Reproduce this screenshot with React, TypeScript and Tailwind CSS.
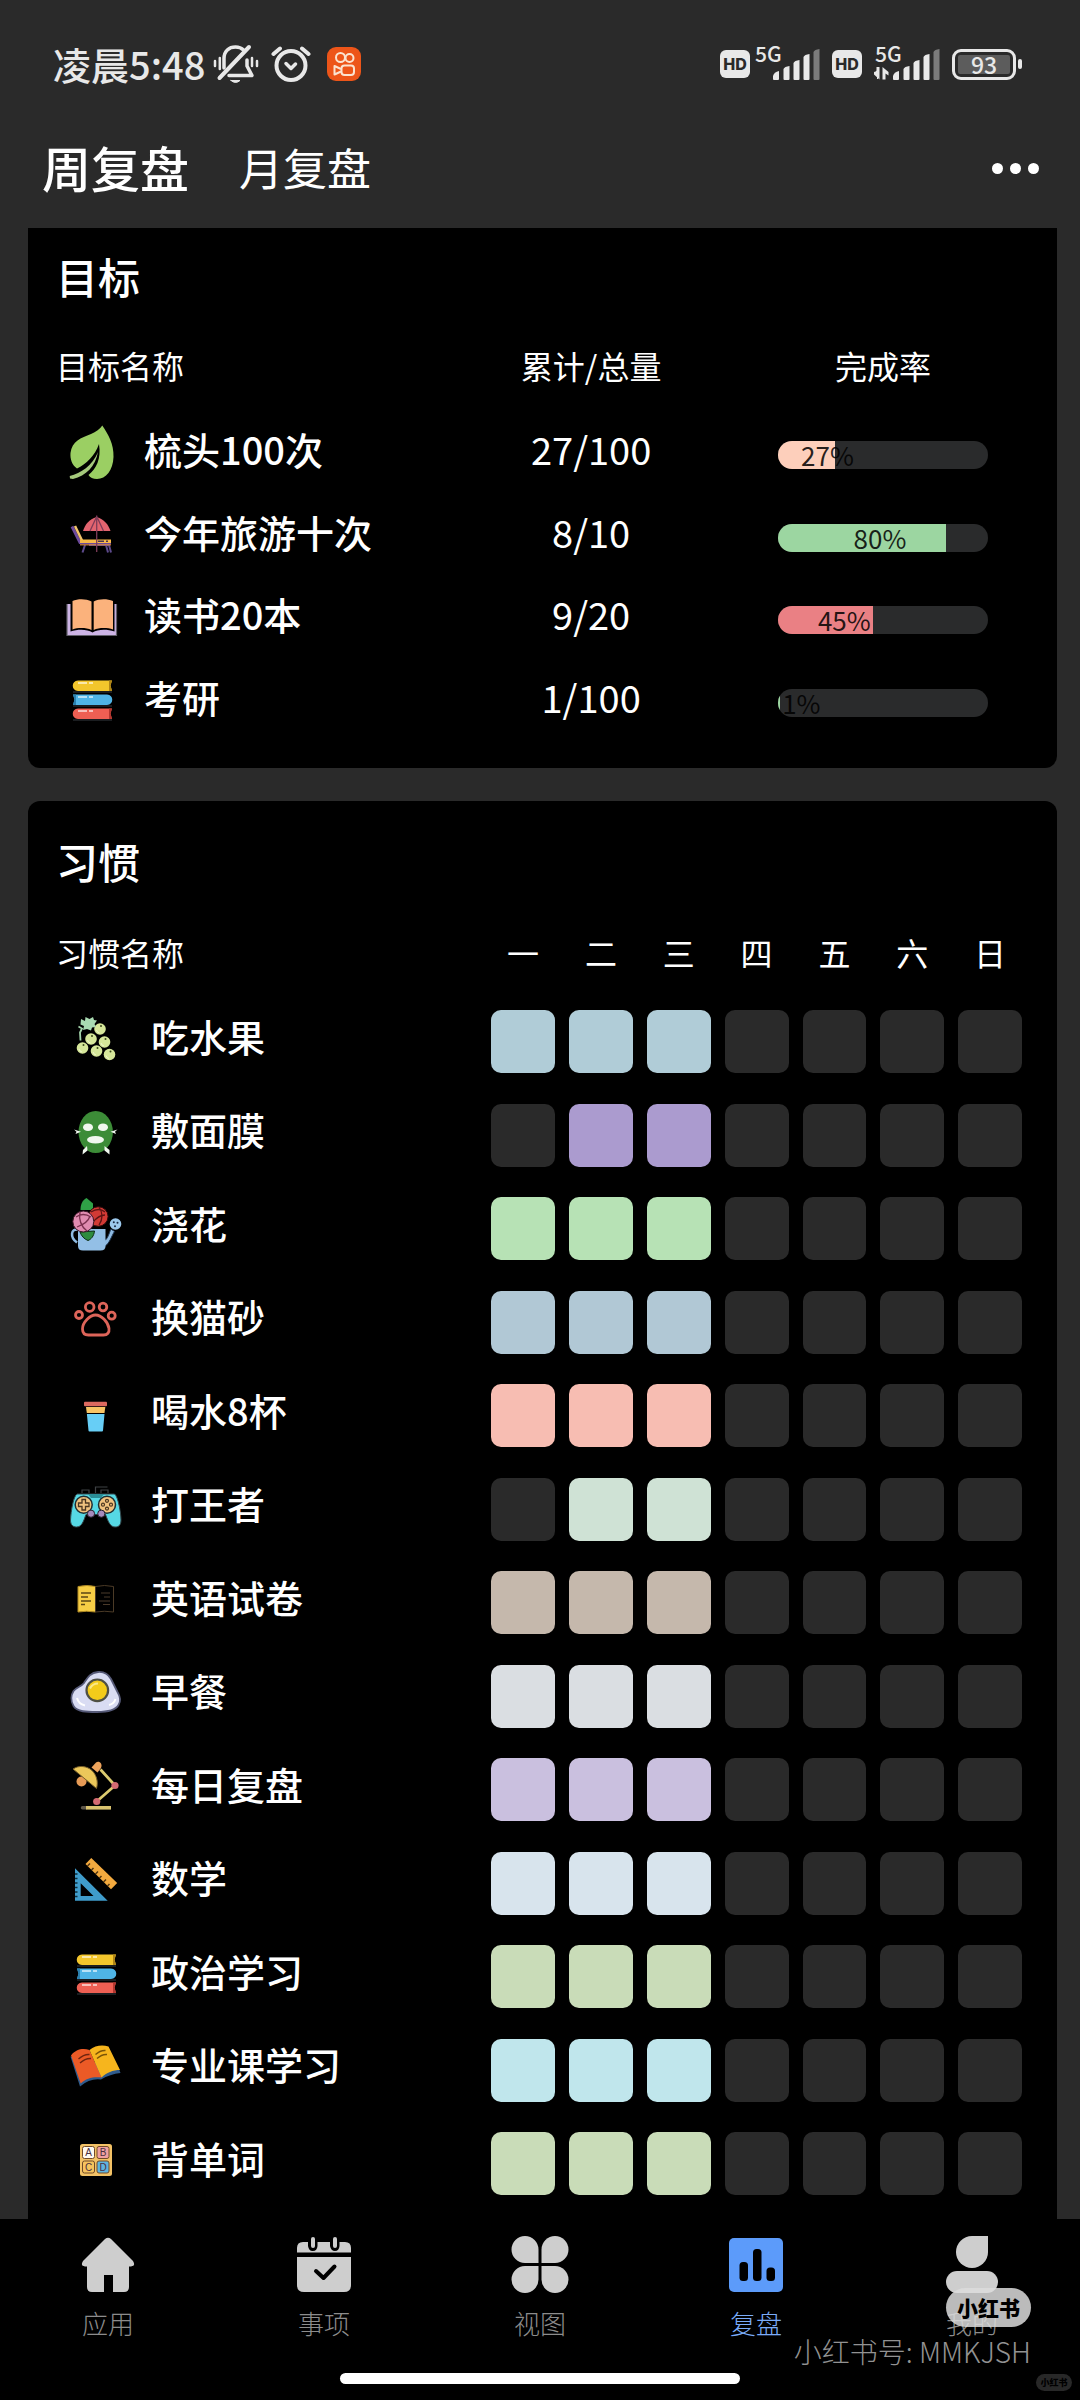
import { useState } from "react";
import type { ReactNode } from "react";
import clsx from "clsx";

interface Goal {
  name: string;
  progress: string;
  percent: number;
  icon: ReactNode;
  fill: string;
  labelOffset: string;
}

interface Habit {
  name: string;
  icon: ReactNode;
  color: string;
  done: number[];
}

const WEEKDAYS = ["一", "二", "三", "四", "五", "六", "日"];

function Icon({ children }: { children: ReactNode }) {
  return (
    <svg viewBox="0 0 56 56" className="size-14 shrink-0" fill="none" aria-hidden="true">
      {children}
    </svg>
  );
}

function LeafIcon() {
  return (
    <Icon>
      <path
        d="M38.3 2.5C44 11 50 21 49.5 34C49 47 42 56 33 56C29 56 26 54.500 24.500 52C32 46 37.500 36 35 21C31 33 22 41 13 45.500C8 42 6 36 6.500 30C8 18 17 15 27 11C32 9 36 6 38.3 2.5Z"
        fill="#9bcf63"
      />
      <path d="M5.700 53C17 50 28 43 34 29C31.500 43 22 53 9 56L6 55.500Z" fill="#a5c97c" />
    </Icon>
  );
}

function BeachIcon() {
  return (
    <Icon>
      <path d="M8 20.500L16 36.500H47" stroke="#6d4a9c" strokeWidth="3" />
      <path d="M11 20L18 34.500" stroke="#f2c46b" strokeWidth="2.500" />
      <rect x="16" y="33.500" width="31" height="3.500" fill="#f7b948" />
      <path d="M34 35.200h6M42 35.200h2" stroke="#4a3550" strokeWidth="1.500" />
      <path d="M21 39l-2.500 7.500M25 39h20l2 7.500M42 39l2 7.500" stroke="#5d4a8c" strokeWidth="2" />
      <path d="M16 38.800H47" stroke="#d98a4a" strokeWidth="1.200" />
      <path d="M32.700 11C25 13.500 21 18.500 19 25h27.500C44.500 18.500 40 13.500 32.700 11Z" fill="#e2646f" />
      <path d="M32.500 11L26 25M33 11l6.500 14M32.700 9.500V46" stroke="#7d3c58" strokeWidth="1.300" />
    </Icon>
  );
}

function OpenBookIcon() {
  return (
    <Icon>
      <path d="M3 16v31.500h49.500V16" fill="#cdb4e6" stroke="#63606b" strokeWidth="1.200" />
      <path
        d="M6.500 11.500C13 9 22 9 28.500 13C35 9 44 9 50.500 11.500V43.500C43 41 34 41 28.500 44.500C23 41 14 41 6.500 43.500Z"
        fill="#000"
      />
      <path d="M8.500 13C14 10.500 22 10.500 27.500 13.500V42C22 39.500 14 39.500 8.500 41.500Z" fill="#fbb27c" />
      <path d="M29.700 13.500C35 10.500 43 10.500 49 13V41.500C43 39.500 35 39.500 29.700 42Z" fill="#fbb27c" />
    </Icon>
  );
}

function BookStackIcon() {
  return (
    <Icon>
      <path d="M14 9.500H48L46.500 14.500L48 20H14C7 20 7 9.500 14 9.500Z" fill="#f3c62c" />
      <path d="M45 9.500h3l-1.500 5L48 20h-3Z" fill="#b08516" />
      <path d="M43 23.500H9L10.500 28.500L9 34H43C50 34 50 23.500 43 23.500Z" fill="#4fb4e6" />
      <path d="M9 23.500h3v10.500H9l1.500-5.500Z" fill="#2a7fae" />
      <path d="M14 37.500H48L46.500 42.500L48 48H14C7 48 7 37.500 14 37.500Z" fill="#ee5f53" />
      <path d="M45 37.500h3l-1.500 5L48 48h-3Z" fill="#b3362f" />
      <path d="M14 12h9M25 12h4M14 26h9M25 26h4M14 40h9M25 40h4" stroke="#fff" strokeOpacity=".8" strokeWidth="1.500" />
      <path d="M9 21H48M9 35H48M9 49H48" stroke="#6a7480" strokeOpacity=".5" />
    </Icon>
  );
}

function GrapeIcon() {
  const grapes = [
    [32, 19],
    [23, 29],
    [36.5, 32],
    [14.5, 38],
    [28.500, 41],
    [41.500, 44.500],
  ];
  return (
    <Icon>
      {grapes.map(([cx, cy]) => (
        <g key={`${cx}-${cy}`}>
          <circle cx={cx} cy={cy} r="5.800" fill="#d6e79a" />
          <circle cx={cx + 1} cy={cy - 3} r="1" fill="#3c4a1c" />
          <path d={`M${cx - 3.5} ${cy + 1}a4 4 0 0 0 3 3`} stroke="#f1f7cf" />
        </g>
      ))}
      <path d="M10.500 16.500l3.500 2-2 4 .5 8" stroke="#a4d3ab" strokeWidth="1.800" />
      <path
        d="M13 9L17 11L17.500 7L21.500 9L25 7L26 10L29 10.500L26.500 14L28 17L24 17.500L23 20.500L19 19L15 20L16 16L12.500 14.500Z"
        fill="#a9dab2"
      />
    </Icon>
  );
}

function FaceMaskIcon() {
  return (
    <Icon>
      <ellipse cx="27.700" cy="29" rx="17.200" ry="21" fill="#3c8c37" />
      <g fill="#f1f8ef">
        <ellipse cx="20" cy="24.300" rx="5" ry="3.800" />
        <ellipse cx="35" cy="24.300" rx="5" ry="3.800" />
        <ellipse cx="27.500" cy="36.700" rx="8.500" ry="3.800" />
        <path d="M6 26.500L13 28.700L7.500 31L8.500 28.700Z" />
        <path d="M49.500 26.500L42.500 28.700L48 31L47 28.700Z" />
        <path d="M19 43L19.500 47.500L14.500 51.500L15 47Z" />
        <path d="M36.500 43L36.500 47.500L41.500 51.500L41.500 47Z" />
      </g>
    </Icon>
  );
}

function WateringIcon() {
  return (
    <Icon>
      <path d="M10 32.500C3 31.500 1.500 40 9 45.500" stroke="#8fbbe2" strokeWidth="2.500" />
      <path d="M36 44C40 42 41 36 43 32L46.500 34.500C43 40 42 46 36 50Z" fill="#8fbbe2" stroke="#1d3350" />
      <path d="M10 32h27.500v17q0 4.500-5 4.500H15q-5 0-5-4.500Z" fill="#93bfe6" />
      <circle cx="47.500" cy="27" r="5.800" fill="#9cc8ec" />
      <g fill="#1b2a44">
        <circle cx="45.800" cy="25.200" r="1" />
        <circle cx="49.500" cy="25.800" r="1" />
        <circle cx="47" cy="29.300" r="1" />
      </g>
      <path d="M12 35L26.500 34C26 39 23 42.500 20 43.500C16 42 13.500 39 12 35Z" fill="#2e8b3d" stroke="#0c2b12" />
      <path d="M18.500 1L25 6.500V13H12.500C12.500 8 14 3.500 18.500 1Z" fill="#2fa147" />
      <circle cx="30.300" cy="19.500" r="9.800" fill="#d23a35" stroke="#2b0a0a" />
      <path d="M23 15q8-5 14 0M31 10q6 9 0 18M25 25q6-7 12-7" stroke="#5e1414" strokeWidth="1.300" />
      <circle cx="15.300" cy="24.500" r="10.500" fill="#e08bb0" stroke="#3a1626" />
      <path d="M8 20q7-5 15 0M12 15q-2 12 7 19M22 19q-2 7-13 11" stroke="#7a2f4e" strokeWidth="1.300" />
    </Icon>
  );
}

function PawIcon() {
  return (
    <Icon>
      <g stroke="#dd6459" strokeWidth="2.800">
        <circle cx="11" cy="25" r="3.500" />
        <circle cx="21.700" cy="17" r="4.300" />
        <circle cx="35" cy="17" r="3.800" />
        <circle cx="43.700" cy="25.700" r="3.500" />
        <path d="M27.500 25C22 25 14.500 32.500 14.500 39C14.500 43 17 45 20.500 45H35.500C39.500 45 41.500 42.500 41 38.500C40 32 33.500 25 27.500 25Z" />
      </g>
    </Icon>
  );
}

function CupIcon() {
  return (
    <Icon>
      <rect x="16" y="17.800" width="23" height="4.500" rx="1" fill="#dc695f" />
      <path d="M18 23H37.300L36.500 29H18.800Z" fill="#f8c465" />
      <path d="M18.900 30H36.500L35 46.500q0 1-1 1H21.500q-1 0-1-1Z" fill="#67cef6" />
    </Icon>
  );
}

function GamepadIcon() {
  return (
    <Icon>
      <path d="M14 16v-3h7v3M33 16v-3h7v3M27.500 16v-6h12" stroke="#3f4245" strokeWidth="1.200" />
      <path
        d="M9 17H46.500C50 19 53 36 53 43C53 49 50 50 47 50C42 50 40 44 37.500 37.500H18C15.500 44 14 50 8.500 50C5 50 2.500 48 2.500 43C3 34 5.500 19 9 17Z"
        fill="#56d8e4"
        stroke="#34474c"
      />
      <path d="M20 17l3 4h10l3-4" fill="#2a8d96" />
      <circle cx="15.700" cy="27.700" r="8.500" fill="#f0c27f" stroke="#1f2f33" strokeWidth="1.500" />
      <circle cx="39" cy="27.700" r="8.500" fill="#f0c27f" stroke="#1f2f33" strokeWidth="1.500" />
      <path d="M14 22.500h3.500V26H21v3.500h-3.500V33H14v-3.500h-3.500V26H14Z" stroke="#4c3721" strokeWidth="1.300" />
      <g stroke="#4c3721" strokeWidth="1.200">
        <circle cx="39" cy="23.800" r="1.500" />
        <circle cx="39" cy="31.600" r="1.500" />
        <circle cx="35" cy="27.700" r="1.500" />
        <circle cx="43" cy="27.700" r="1.500" />
      </g>
      <circle cx="23" cy="36.700" r="3.600" fill="#a68bbd" stroke="#29222f" />
      <circle cx="33.300" cy="36.700" r="3.600" fill="#a68bbd" stroke="#29222f" />
    </Icon>
  );
}

function PaperIcon() {
  return (
    <Icon>
      <path d="M10 15.500q9-2 17.500 0v25.500q-9-1.500-17.500 0Z" fill="#f6cd45" stroke="#b08a24" />
      <path d="M27.500 15.500q9-2 18 0v25.500q-9-1.500-18 0Z" stroke="#4b3a26" />
      <path d="M13 22h10M13 26h7M13 30h10M13 33.500h4" stroke="#5b4615" strokeWidth="1.300" />
      <path d="M33 22h9M36 26h6M31 30h11M35 33.500h7" stroke="#4b3a2a" strokeWidth="1.100" />
    </Icon>
  );
}

function EggIcon() {
  return (
    <Icon>
      <path
        d="M30 8C36 7.500 40.500 10.500 43 15C45.500 20 47.500 24 49.500 28C52 32 53 37 50.500 41C47.500 46.500 38 48 29 48C19 48 9 48 5.500 42C2.500 37 3 31 5.500 27C8 23 13 23 16 19C19 14.500 22 8.500 30 8Z"
        fill="#d9dcf3"
        stroke="#565a78"
        strokeWidth="1.800"
      />
      <circle cx="29.300" cy="26.300" r="10.800" fill="#f3cb1a" stroke="#4f5045" strokeWidth="2.200" />
      <path d="M22 24.500q2.500-5 8-5" stroke="#fbe989" strokeWidth="2" />
      <path d="M9 34q1.500 6 8 7.500M41 41q5-1 6.500-6" stroke="#fff" strokeWidth="2" />
    </Icon>
  );
}

function LampIcon() {
  return (
    <Icon>
      <path d="M32.500 11.500L47 27.500L28.700 43.500" stroke="#dccb70" strokeWidth="2.800" />
      <circle cx="13.500" cy="23.500" r="5" fill="#e79b56" />
      <path d="M23.500 9.500L28 4.500C31 2.500 35 5.500 33 10L29.500 14.500Z" fill="#eda35c" />
      <path d="M5 11C11 7 19 8 24 12.500C28.500 17 30.500 24 28.500 30.500Z" fill="#ecc75a" stroke="#7a612a" />
      <circle cx="47" cy="27.500" r="3.600" fill="#d36a71" />
      <circle cx="28.700" cy="43.500" r="3.600" fill="#d36a71" />
      <path d="M14.500 49.800h3.500" stroke="#5d564a" strokeWidth="3.500" strokeLinecap="round" />
      <path d="M18 49.800h25" stroke="#dac370" strokeWidth="3.600" />
    </Icon>
  );
}

function RulerIcon() {
  return (
    <Icon>
      <path d="M23.300 7L49.200 32L43 38.200L17.500 13Z" fill="#f3aa3f" />
      <path d="M19.500 15l2.500-2.500M23.500 19l2-2M27.500 23l2.500-2.500M31.500 27l2-2M35.500 31l2.500-2.500M39.500 35l2-2" stroke="#513510" strokeWidth="1.500" />
      <path d="M7 17.300V49.700H39.700ZM12.700 32.300L25.500 45H12.700Z" fill="#3f9ccb" fillRule="evenodd" />
      <path d="M7 23h2.500M7 27.500h2.500M7 32h2.500M7 36.500h2.500M7 41h2.500M7 45.500h2.500" stroke="#0c2d3d" strokeWidth="1.300" />
    </Icon>
  );
}

function TextbookIcon() {
  return (
    <Icon>
      <path d="M2.500 18.500L12 48.500Q22 40 33 41.500Q42 36 52.500 35L51 31Z" fill="#2f5b8c" />
      <path d="M3 17.500C8 11 15 10 21.500 12L33.500 39.500C26 38.500 18 40 12.700 45.500Z" fill="#ec5a26" />
      <path d="M21.500 12C27 7.500 34 6.500 40.500 8.500L52 32C45 32 38.500 34.500 33.500 39.500Z" fill="#f6b51d" />
      <path d="M10.500 21q5.500-5 11-4.500M12 25q5.500-5 11-4.500" stroke="#6f2410" strokeWidth="1.400" />
      <path d="M27.500 16.500q5-4.500 10-4M29 20.500q5-4.500 10-4" stroke="#7a5407" strokeWidth="1.400" />
    </Icon>
  );
}

function BlocksIcon() {
  const blocks = [
    { letter: "A", x: 14.5, y: 14.5, fill: "#fffaf0" },
    { letter: "B", x: 29, y: 14.5, fill: "#f0a0a0" },
    { letter: "C", x: 14.5, y: 29, fill: "#f6c35e" },
    { letter: "D", x: 29, y: 29, fill: "#5fb4e0" },
  ];
  return (
    <Icon>
      <rect x="12" y="12" width="32" height="32" rx="2.500" fill="#f3c266" />
      {blocks.map((b) => (
        <g key={b.letter}>
          <rect x={b.x} y={b.y} width="12" height="12" rx="2" fill={b.fill} stroke="#704a28" />
          <text
            x={b.x + 6}
            y={b.y + 9.5}
            textAnchor="middle"
            className="font-['Liberation_Sans'] text-[10px]"
            fill="#4a3040"
          >
            {b.letter}
          </text>
        </g>
      ))}
    </Icon>
  );
}

const GOALS: Goal[] = [
  { name: "梳头100次", progress: "27/100", percent: 27, icon: <LeafIcon />, fill: "bg-[#fdcfbb]", labelOffset: "pl-[11%]" },
  { name: "今年旅游十次", progress: "8/10", percent: 80, icon: <BeachIcon />, fill: "bg-[#9cd6a1]", labelOffset: "pl-[36%]" },
  { name: "读书20本", progress: "9/20", percent: 45, icon: <OpenBookIcon />, fill: "bg-[#ea8084]", labelOffset: "pl-[19%]" },
  { name: "考研", progress: "1/100", percent: 1, icon: <BookStackIcon />, fill: "bg-[#9cd6a1]", labelOffset: "pl-[2%]" },
];

const HABITS: Habit[] = [
  { name: "吃水果", icon: <GrapeIcon />, color: "bg-[#b0ccd7]", done: [0, 1, 2] },
  { name: "敷面膜", icon: <FaceMaskIcon />, color: "bg-[#ab9bcf]", done: [1, 2] },
  { name: "浇花", icon: <WateringIcon />, color: "bg-[#b7e2b5]", done: [0, 1, 2] },
  { name: "换猫砂", icon: <PawIcon />, color: "bg-[#b1c8d5]", done: [0, 1, 2] },
  { name: "喝水8杯", icon: <CupIcon />, color: "bg-[#f7bdb2]", done: [0, 1, 2] },
  { name: "打王者", icon: <GamepadIcon />, color: "bg-[#cfe2d5]", done: [1, 2] },
  { name: "英语试卷", icon: <PaperIcon />, color: "bg-[#c5b8ac]", done: [0, 1, 2] },
  { name: "早餐", icon: <EggIcon />, color: "bg-[#dadee2]", done: [0, 1, 2] },
  { name: "每日复盘", icon: <LampIcon />, color: "bg-[#cac0df]", done: [0, 1, 2] },
  { name: "数学", icon: <RulerIcon />, color: "bg-[#d8e4ed]", done: [0, 1, 2] },
  { name: "政治学习", icon: <BookStackIcon />, color: "bg-[#c9dcb8]", done: [0, 1, 2] },
  { name: "专业课学习", icon: <TextbookIcon />, color: "bg-[#c0e6ec]", done: [0, 1, 2] },
  { name: "背单词", icon: <BlocksIcon />, color: "bg-[#c9dcb8]", done: [0, 1, 2] },
];

function HdBadge() {
  return (
    <span className="flex h-7 w-[30px] items-center justify-center rounded-md bg-[#e8e8e8] font-['Inter'] text-base font-extrabold text-[#2a2a2a]">
      HD
    </span>
  );
}

function Signal({ data = false }: { data?: boolean }) {
  return (
    <svg viewBox="0 0 66 34" className="h-[34px] w-[66px] overflow-visible" aria-hidden="true">
      <text x="1" y="15" className="font-['Noto_Sans_CJK_SC'] text-[21px] font-medium" fill="#e8e8e8">
        5G
      </text>
      {data && <path d="M0 26l4-4v10h-1v-5.500M2.500 20h3v12.500L0 27.500v-3l2.500 2ZM8.500 32.500V20l6 5v3.500l-3-2v6Z" fill="#e8e8e8" />}
      <g fill="#e8e8e8">
        <path d="M19 32v-3q1-4 6-5v8q0 1-1 1h-4q-1 0-1-1Z" />
        <path d="M29.500 22q1-2.500 6-3v13q0 1-1 1h-4q-1 0-1-1Z" />
        <path d="M39.500 16q1-2.500 6-3v19q0 1-1 1h-4q-1 0-1-1Z" />
        <path d="M49.500 10q1-2.500 6-3v25q0 1-1 1h-4q-1 0-1-1Z" />
      </g>
      <path d="M59.500 5q1-2.500 6-3v30q0 1-1 1h-4q-1 0-1-1Z" fill="#7b7b7b" />
    </svg>
  );
}

function StatusBar() {
  return (
    <div className="flex items-center justify-between pt-[34px] pr-[58px] pl-[53px] text-[#e8e8e8]">
      <div className="flex items-center">
        <span className="text-[38px] leading-[60px] font-medium">凌晨5:48</span>
        <svg viewBox="0 0 46 40" className="ml-2 h-10 w-[46px]" fill="none" stroke="currentColor" strokeWidth="3.500" strokeLinecap="round" aria-hidden="true">
          <path d="M11 24V14.500C11 7 16 3 22.500 3C26 3 28.500 4 30.500 6" />
          <path d="M34 16V22L39 31.500H16" strokeLinejoin="round" />
          <path d="M36 3L6.500 34" strokeWidth="4" />
          <path d="M18 36.500h9q-4.500 4-9 0Z" fill="currentColor" strokeWidth="1" />
          <path d="M2 17v5M6.800 14v11M39 14v8M44 17v5" strokeWidth="2.500" />
        </svg>
        <svg viewBox="0 0 40 38" className="ml-3 h-[38px] w-10" fill="none" stroke="currentColor" strokeWidth="4" strokeLinecap="round" aria-hidden="true">
          <circle cx="20" cy="20.500" r="14.500" />
          <path d="M2.500 9L9 3.500M37.500 9L31 3.500" />
          <path d="M15 18.500l5 5 4.500-4.500" strokeWidth="3.500" strokeLinejoin="round" />
        </svg>
        <svg viewBox="0 0 34 34" className="ml-4 size-[34px]" fill="none" aria-hidden="true">
          <rect width="34" height="34" rx="9" fill="#ed5519" />
          <g stroke="#fbe3d0" strokeWidth="2">
            <circle cx="13.500" cy="10.500" r="4.500" />
            <circle cx="22.500" cy="11" r="4" />
            <rect x="14.500" y="18.500" width="12.500" height="9.500" rx="3" />
            <path d="M14 22L7.500 19V27.500L14 24.500" strokeLinejoin="round" />
          </g>
        </svg>
      </div>
      <div className="flex items-center gap-3">
        <div className="flex items-center gap-1">
          <HdBadge />
          <Signal />
        </div>
        <HdBadge />
        <Signal data />
        <span className="flex items-center">
          <span className="flex h-[31px] w-16 items-center justify-center rounded-[9px] border-3 border-current p-[3px]">
            <span className="flex h-full w-full items-center justify-center rounded-xs bg-[#5c5c5c] text-[23px] leading-none font-medium">
              93
            </span>
          </span>
          <span className="ml-[2px] h-[10px] w-1 rounded-sm bg-current" />
        </span>
      </div>
    </div>
  );
}

function Header({ tab, onChange }: { tab: string; onChange: (tab: string) => void }) {
  return (
    <header className="h-[228px]">
      <StatusBar />
      <div className="flex h-[148px] items-center justify-between pr-[41px] pl-[42px]">
        <div className="flex items-center gap-[50px] pb-[2px] text-white">
          {["周复盘", "月复盘"].map((name) => (
            <button
              key={name}
              type="button"
              onClick={() => onChange(name)}
              className={clsx("leading-[72px]", tab === name ? "text-[49px] font-medium" : "text-[44px]")}
            >
              {name}
            </button>
          ))}
        </div>
        <button type="button" aria-label="更多" className="flex gap-[7px]">
          <span className="size-[11px] rounded-full bg-white" />
          <span className="size-[11px] rounded-full bg-white" />
          <span className="size-[11px] rounded-full bg-white" />
        </button>
      </div>
    </header>
  );
}

function GoalsCard() {
  return (
    <section className="rounded-b-xl bg-black px-7 pt-5 pb-7">
      <h2 className="text-[42px] leading-[56px] font-medium">目标</h2>
      <table className="mt-5 w-full table-fixed">
        <thead>
          <tr className="h-[86px] text-[32px]">
            <th className="w-2/5 pb-1 text-left font-normal">目标名称</th>
            <th className="w-3/10 pb-1 font-normal">累计/总量</th>
            <th className="w-3/10 pb-1 font-normal">完成率</th>
          </tr>
        </thead>
        <tbody>
          {GOALS.map((goal) => (
            <tr key={goal.name} className="h-[82px] even:h-[83px]">
              <td>
                <div className="flex items-center gap-6 pl-2 text-[38px] leading-[56px] font-medium whitespace-nowrap">
                  {goal.icon}
                  <span className="pb-1">{goal.name}</span>
                </div>
              </td>
              <td className="pb-1 text-center text-[38px] leading-[56px]">{goal.progress}</td>
              <td className="pt-2">
                <div className="relative mx-auto h-7 w-[72%]">
                  <div className="h-full overflow-hidden rounded-full bg-[#2a2b2c]">
                    <div className={clsx("h-full", goal.fill)} style={{ width: `${goal.percent}%` }} />
                  </div>
                  <span className={clsx("absolute inset-0 text-[26px] leading-7 text-black/85", goal.labelOffset)}>
                    {goal.percent}%
                  </span>
                </div>
              </td>
            </tr>
          ))}
        </tbody>
      </table>
    </section>
  );
}

function HabitsCard() {
  return (
    <section className="flex-1 rounded-t-xl bg-black px-7 pt-8">
      <h2 className="text-[42px] leading-[56px] font-medium">习惯</h2>
      <table className="mt-[27px] w-full table-fixed">
        <thead>
          <tr className="h-[75px] text-[32px]">
            <th className="pb-1 text-left font-normal">习惯名称</th>
            {WEEKDAYS.map((day) => (
              <th key={day} className="w-[8%] pb-1 font-normal">
                {day}
              </th>
            ))}
          </tr>
        </thead>
        <tbody>
          {HABITS.map((habit) => (
            <tr key={habit.name} className="h-[93px] even:h-[94px]">
              <td>
                <div className="flex items-center gap-[27px] pl-3 text-[38px] leading-[56px] font-medium whitespace-nowrap">
                  {habit.icon}
                  <span className="pb-1">{habit.name}</span>
                </div>
              </td>
              {WEEKDAYS.map((day, i) => (
                <td key={day} className="pt-2">
                  <div
                    className={clsx(
                      "mx-auto h-[63px] w-[82%] rounded-[10px]",
                      habit.done.includes(i) ? habit.color : "bg-[#2a2a2a]",
                    )}
                  />
                </td>
              ))}
            </tr>
          ))}
        </tbody>
      </table>
    </section>
  );
}

function NavIcon({ children }: { children: ReactNode }) {
  return (
    <svg viewBox="0 0 58 58" className="size-[58px]" fill="#cecece" aria-hidden="true">
      {children}
    </svg>
  );
}

const NAV_ITEMS = [
  {
    label: "应用",
    icon: (
      <NavIcon>
        <path d="M26 4Q29 1.500 32 4L54 26Q57 31 52 31.500H50V52Q50 57 45 57H34V40H25V57H13Q8 57 8 52V31.500H6Q1 31 4 26Z" />
      </NavIcon>
    ),
  },
  {
    label: "事项",
    icon: (
      <NavIcon>
        <path d="M2 17.500V13Q2 7 8 7H13V11Q14 16.500 18 16Q22 16 22.500 11V7H35V11Q36 16 40 16Q44 16 44.500 11V7H50Q56 7 56 13V17.500Z" />
        <rect x="16" y="2" width="4" height="11" rx="2" />
        <rect x="38" y="2" width="4" height="11" rx="2" />
        <path d="M2 22H56V50Q56 57 49 57H9Q2 57 2 50Z" />
        <path d="M21 36L28.500 43L39.500 31.500" fill="none" stroke="#000" strokeWidth="4" strokeLinecap="round" strokeLinejoin="round" />
      </NavIcon>
    ),
  },
  {
    label: "视图",
    icon: (
      <NavIcon>
        <path d="M27.500 28H14A13.500 13.500 0 1 1 27.500 14.500Z" />
        <path d="M30.500 28H44A13.500 13.500 0 1 0 30.500 14.500Z" />
        <path d="M27.500 31H14A13.500 13.500 0 1 0 27.500 44.500Z" />
        <path d="M30.500 31H44A13.500 13.500 0 1 1 30.500 44.500Z" />
      </NavIcon>
    ),
  },
  {
    label: "复盘",
    icon: (
      <NavIcon>
        <rect x="2" y="3" width="54" height="54" rx="5" fill="#5c9bfa" />
        <g fill="#000">
          <rect x="12.500" y="27" width="8.500" height="19" rx="3.500" />
          <rect x="26" y="14" width="8.500" height="32" rx="3.500" />
          <rect x="39.500" y="32.500" width="8.500" height="13.500" rx="3.500" />
        </g>
      </NavIcon>
    ),
  },
  {
    label: "我的",
    icon: (
      <NavIcon>
        <path d="M45 1V17A16 16 0 1 1 29 1Z" />
        <rect x="3" y="36" width="52" height="22" rx="11" />
      </NavIcon>
    ),
  },
];

function BottomNav() {
  return (
    <nav className="sticky bottom-0 flex h-[181px] flex-col items-center justify-between bg-black pb-4">
      <ul className="flex w-full">
        {NAV_ITEMS.map((item) => (
          <li key={item.label} className="flex-1">
            <a href="#" className="flex flex-col items-center gap-3 pt-4">
              {item.icon}
              <span
                className={clsx(
                  "text-[26px] leading-9 font-light",
                  item.label === "复盘" ? "text-[#7aabf8]" : "text-[#8c8c8c]",
                )}
              >
                {item.label}
              </span>
            </a>
          </li>
        ))}
      </ul>
      <span className="h-[11px] w-[37%] rounded-full bg-white" />
      <div className="absolute right-[49px] bottom-[31px] flex flex-col items-end gap-[6px]">
        <span className="flex h-[39px] w-[85px] items-center justify-center rounded-full bg-[#dcdcdc]/85 text-[21px] font-black text-black">
          小红书
        </span>
        <span className="text-[28px] leading-9 font-light whitespace-nowrap text-[#929292]">小红书号: MMKJSH</span>
      </div>
      <span className="absolute right-2 bottom-[9px] flex h-[17px] w-9 items-center justify-center rounded-full bg-[#282828] text-[9px] font-black text-black">
        小红书
      </span>
    </nav>
  );
}

export default function App() {
  const [tab, setTab] = useState("周复盘");

  return (
    <div className="flex min-h-screen flex-col bg-[#2a2a2a] font-['Noto_Sans_CJK_SC',sans-serif] text-white">
      <Header tab={tab} onChange={setTab} />
      <main className="flex flex-1 flex-col gap-[33px] pr-[23px] pl-7">
        <GoalsCard />
        <HabitsCard />
      </main>
      <BottomNav />
    </div>
  );
}
